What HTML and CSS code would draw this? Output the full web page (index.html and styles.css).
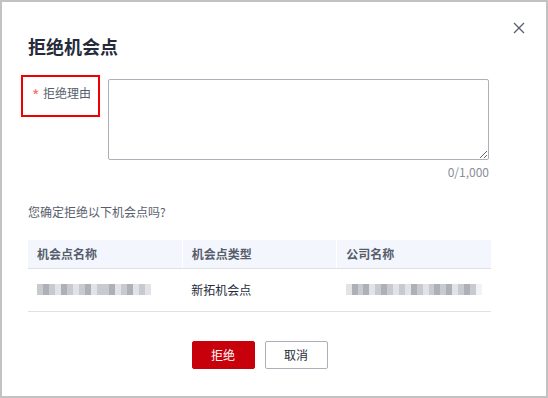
FILE: index.html
```html
<!DOCTYPE html>
<html lang="zh-CN">
<head>
    <meta charset="UTF-8">
    <meta name="viewport" content="width=device-width, initial-scale=1.0">
    <title>拒绝机会点</title>
    <link rel="stylesheet" href="styles.css">
</head>
<body>
    <div class="dialog">
        <button class="close" aria-label="关闭">
            <svg width="12" height="12" viewBox="0 0 12 12">
                <path d="M1 1 L11 11 M11 1 L1 11" stroke="#575d6c" stroke-width="1.3" fill="none" />
            </svg>
        </button>

        <h1 class="title">拒绝机会点</h1>

        <div class="form-row">
            <label class="label" for="reason"><span class="star">*</span>拒绝理由</label>
            <div class="field">
                <textarea id="reason" class="textarea"></textarea>
                <div class="counter">0/1,000</div>
            </div>
        </div>

        <p class="question">您确定拒绝以下机会点吗?</p>

        <table class="table">
            <thead>
                <tr>
                    <th>机会点名称</th>
                    <th>机会点类型</th>
                    <th>公司名称</th>
                </tr>
            </thead>
            <tbody>
                <tr>
                    <td>
                        <div class="blur">
                            <span class="b2"></span><span class="b3"></span><span class="b2"></span><span class="b1"></span><span class="b3"></span><span class="b2"></span><span class="b1"></span><span class="b2"></span><span class="b3"></span><span class="b1"></span><span class="b2"></span><span class="b2"></span><span class="b3"></span><span class="b1"></span><span class="b2"></span><span class="b3"></span><span class="b1"></span><span class="b2"></span><span class="b1"></span>
                        </div>
                    </td>
                    <td>新拓机会点</td>
                    <td>
                        <div class="blur">
                            <span class="b1"></span><span class="b3"></span><span class="b2"></span><span class="b3"></span><span class="b1"></span><span class="b2"></span><span class="b3"></span><span class="b2"></span><span class="b1"></span><span class="b2"></span><span class="b1"></span><span class="b3"></span><span class="b2"></span><span class="b1"></span><span class="b2"></span><span class="b3"></span><span class="b2"></span><span class="b3"></span><span class="b1"></span><span class="b2"></span><span class="b3"></span><span class="b2"></span><span class="b0"></span>
                        </div>
                    </td>
                </tr>
            </tbody>
        </table>

        <div class="actions">
            <button class="btn btn-danger">拒绝</button>
            <button class="btn btn-default">取消</button>
        </div>
    </div>
</body>
</html>
```

FILE: styles.css
```css
* {
    box-sizing: border-box;
}

body {
    margin: 0;
    padding: 0;
    font-family: "Noto Sans CJK SC", "Noto Sans", sans-serif;
    background-color: #ffffff;
}

.dialog {
    position: relative;
    width: 548px;
    height: 398px;
    border: 2px solid #c2c2c2;
    padding: 32px 55px 0 26px;
    background-color: #ffffff;
}

.close {
    position: absolute;
    top: 18px;
    right: 19px;
    width: 16px;
    height: 16px;
    padding: 2px;
    border: none;
    background: none;
    cursor: pointer;
    display: flex;
    align-items: center;
    justify-content: center;
}

.title {
    margin: 0;
    font-size: 18px;
    line-height: 24px;
    font-weight: bold;
    color: #252b3a;
}

.form-row {
    display: flex;
    margin-top: 17px;
}

.label {
    margin-left: -7px;
    width: 79px;
    height: 42px;
    border: 2px solid #f00000;
    padding: 6px 0 0 9px;
    font-size: 12px;
    line-height: 20px;
    color: #575d6c;
}

.star {
    display: inline-block;
    width: 11px;
    font-size: 16px;
    line-height: 12px;
    vertical-align: -4px;
    color: #f66f6a;
}

.field {
    margin-left: 8px;
    margin-top: 4px;
    width: 381px;
}

.textarea {
    display: block;
    width: 381px;
    height: 81px;
    border: 1px solid #adb0b8;
    border-radius: 2px;
    resize: vertical;
    font-family: inherit;
    font-size: 12px;
}

.counter {
    margin-top: 3px;
    text-align: right;
    font-size: 12px;
    line-height: 18px;
    color: #8a8e99;
}

.question {
    margin: 22px 0 0;
    font-size: 12px;
    line-height: 18px;
    color: #575d6c;
}

.table {
    margin-top: 19px;
    width: 463px;
    border-collapse: collapse;
    table-layout: fixed;
    font-size: 12px;
}

.table th {
    height: 28px;
    padding: 0 9px;
    text-align: left;
    font-weight: bold;
    color: #575d6c;
    background-color: #f3f6fd;
    border-left: 1px solid #ffffff;
    border-bottom: 1px solid #dfe1e6;
}

.table th:first-child {
    border-left: none;
}

.table td {
    height: 43px;
    padding: 0 9px;
    color: #252b3a;
    border-bottom: 1px solid #dfe1e6;
}

.blur {
    display: flex;
    height: 11px;
}

.blur span {
    width: 6px;
    height: 11px;
}

.b0 { background-color: #f2f2f4; }
.b1 { background-color: #e2e3e6; }
.b2 { background-color: #c9cad0; }
.b3 { background-color: #aeb0b7; }

.actions {
    display: flex;
    justify-content: center;
    gap: 10px;
    margin-top: 29px;
    width: 463px;
}

.btn {
    width: 63px;
    height: 28px;
    border-radius: 2px;
    font-family: inherit;
    font-size: 12px;
    cursor: pointer;
}

.btn-danger {
    background-color: #c7000b;
    border: 1px solid #c7000b;
    color: #ffffff;
}

.btn-default {
    background-color: #ffffff;
    border: 1px solid #adb0b8;
    color: #252b3a;
}
```
